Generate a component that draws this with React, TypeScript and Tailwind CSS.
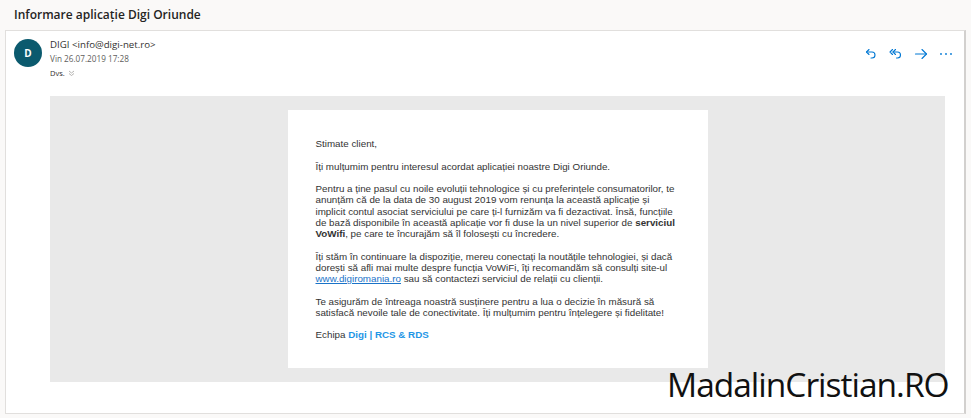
const ReplyIcon = () => (
  <svg width="14" height="14" viewBox="0 0 14 14" fill="none" stroke="#0078d4" strokeWidth="1.1" strokeLinecap="round" strokeLinejoin="round">
    <path d="M5 2.5 2.5 5 5 7.5" />
    <path d="M2.5 5h5.5a3 3 0 0 1 0 6H7" />
  </svg>
);

const ReplyAllIcon = () => (
  <svg width="16" height="14" viewBox="0 0 16 14" fill="none" stroke="#0078d4" strokeWidth="1.1" strokeLinecap="round" strokeLinejoin="round">
    <path d="M4.5 2.5 2 5l2.5 2.5" />
    <path d="M7.5 2.5 5 5l2.5 2.5" />
    <path d="M5 5h4.5a3 3 0 0 1 0 6H8.5" />
  </svg>
);

const ForwardIcon = () => (
  <svg width="14" height="14" viewBox="0 0 14 14" fill="none" stroke="#0078d4" strokeWidth="1.1" strokeLinecap="round" strokeLinejoin="round">
    <path d="M1.5 7h11" />
    <path d="M8 2.5 12.5 7 8 11.5" />
  </svg>
);

const MoreIcon = () => (
  <svg width="14" height="14" viewBox="0 0 14 14" fill="#0078d4">
    <circle cx="2" cy="7" r="0.9" />
    <circle cx="7" cy="7" r="0.9" />
    <circle cx="12" cy="7" r="0.9" />
  </svg>
);

const App = () => {
  const ui = { fontFamily: '"Open Sans", "Noto Sans", sans-serif' };
  const mail = { fontFamily: '"Liberation Sans", Arial, sans-serif' };

  return (
    <div className="relative w-[971px] h-[418px] bg-[#faf9f8] flex flex-col overflow-hidden" style={ui}>
      <div className="h-[30px] px-[14px] flex items-center text-[12px] text-[#252423] font-semibold">
        Informare aplicație Digi Oriunde
      </div>

      <div className="mx-[5px] h-[384px] bg-white border border-[#e1dfdd] border-r-2 border-r-[#d2d0ce] flex flex-col">
        <div className="flex pl-[8px] pt-[8px] pr-[6px]">
          <div className="w-[28px] h-[28px] rounded-full bg-[#0b5a6e] flex items-center justify-center text-white text-[10px] font-bold">
            D
          </div>
          <div className="ml-[8px] flex flex-col text-[#323130]">
            <div className="text-[9.7px] leading-[14px] mt-[-1px]">DIGI &lt;info@digi-net.ro&gt;</div>
            <div className="text-[8.2px] leading-[14px] text-[#605e5c]">Vin 26.07.2019 17:28</div>
            <div className="text-[7.5px] leading-[14px] flex items-center gap-[3px]">
              Dvs.
              <svg width="7" height="7" viewBox="0 0 7 7" fill="none" stroke="#a19f9d" strokeWidth="0.8">
                <path d="M1 1l2.5 2 2.5-2" />
                <path d="M1 3.5l2.5 2 2.5-2" />
              </svg>
            </div>
          </div>
          <div className="ml-auto mt-[8px] flex items-start">
            <span className="w-[25px] flex justify-center"><ReplyIcon /></span>
            <span className="w-[25px] flex justify-center"><ReplyAllIcon /></span>
            <span className="w-[25px] flex justify-center"><ForwardIcon /></span>
            <span className="w-[25px] flex justify-center"><MoreIcon /></span>
          </div>
        </div>

        <div className="ml-[44px] mr-[19px] mt-[16px] h-[286px] bg-[#e9e9e9] flex justify-center pt-[14px]">
          <div className="w-[420px] h-[258px] bg-white px-[28px] pt-[28px] text-[9.8px] leading-[11.25px] text-[#333333] whitespace-nowrap" style={mail}>
            <p>Stimate client,</p>
            <p className="mt-[11.25px]">Îți mulțumim pentru interesul acordat aplicației noastre Digi Oriunde.</p>
            <p className="mt-[11.25px]">
              Pentru a ține pasul cu noile evoluții tehnologice și cu preferințele consumatorilor, te<br />
              anunțăm că de la data de 30 august 2019 vom renunța la această aplicație și<br />
              implicit contul asociat serviciului pe care ți-l furnizăm va fi dezactivat. Însă, funcțiile<br />
              de bază disponibile în această aplicație vor fi duse la un nivel superior de <b>serviciul</b><br />
              <b>VoWifi</b>, pe care te încurajăm să îl folosești cu încredere.
            </p>
            <p className="mt-[11.25px]">
              Îți stăm în continuare la dispoziție, mereu conectați la noutățile tehnologiei, și dacă<br />
              dorești să afli mai multe despre funcția VoWiFi, îți recomandăm să consulți site-ul<br />
              <span className="text-[#1a73c8] underline">www.digiromania.ro</span> sau să contactezi serviciul de relații cu clienții.
            </p>
            <p className="mt-[11.25px]">
              Te asigurăm de întreaga noastră susținere pentru a lua o decizie în măsură să<br />
              satisfacă nevoile tale de conectivitate. Îți mulțumim pentru înțelegere și fidelitate!
            </p>
            <p className="mt-[11.25px]">
              Echipa <b className="text-[#1e96e6]">Digi | RCS &amp; RDS</b>
            </p>
          </div>
        </div>
      </div>

      <div className="absolute left-[667px] top-[362px] text-[33.5px] leading-[44px] text-[#111111] tracking-[-1px]">
        MadalinCristian.RO
      </div>
    </div>
  );
};

export default App;
